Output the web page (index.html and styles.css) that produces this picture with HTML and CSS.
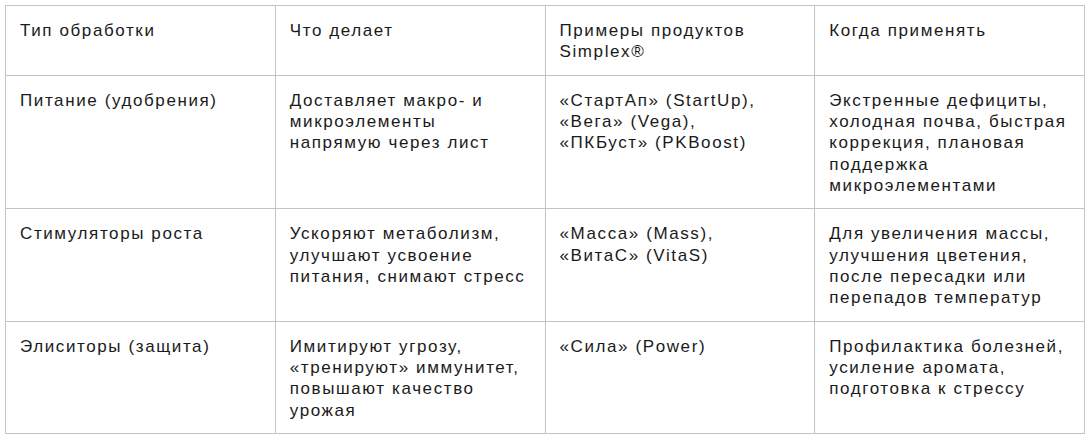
FILE: index.html
```html
<!DOCTYPE html>
<html lang="ru">
<head>
<meta charset="utf-8">
<link rel="stylesheet" href="styles.css">
</head>
<body>
<div class="wrap">
<table class="grid">
  <colgroup><col><col><col><col></colgroup>
  <tr>
    <td>Тип обработки</td>
    <td>Что делает</td>
    <td>Примеры продуктов Simplex®</td>
    <td>Когда применять</td>
  </tr>
  <tr>
    <td>Питание (удобрения)</td>
    <td>Доставляет макро- и микроэлементы напрямую через лист</td>
    <td>«СтартАп» (StartUp), «Вега» (Vega), «ПКБуст»&nbsp;(PKBoost)</td>
    <td>Экстренные дефициты, холодная почва, быстрая коррекция, плановая поддержка микроэлементами</td>
  </tr>
  <tr>
    <td>Стимуляторы роста</td>
    <td>Ускоряют метаболизм, улучшают усвоение питания, снимают стресс</td>
    <td>«Масса» (Mass), «ВитаС»&nbsp;(VitaS)</td>
    <td>Для увеличения массы, улучшения цветения, после пересадки или перепадов температур</td>
  </tr>
  <tr>
    <td>Элиситоры (защита)</td>
    <td>Имитируют угрозу, «тренируют» иммунитет, повышают качество урожая</td>
    <td>«Сила» (Power)</td>
    <td>Профилактика болезней, усиление аромата, подготовка к стрессу</td>
  </tr>
</table>
</div>
</body>
</html>
```
FILE: styles.css
```css
html, body {
  margin: 0;
  padding: 0;
  background: #fff;
}
.wrap {
  padding: 5px;
}
.grid {
  width: 1080px;
  border-collapse: collapse;
  table-layout: fixed;
  font-family: "Liberation Sans", Arial, sans-serif;
  font-size: 17px;
  letter-spacing: 1.6px;
  line-height: 21.33px;
  color: #1a1a1a;
}
.grid td {
  border: 1px solid #c4c4c4;
  padding: 14px 14px 12px 14px;
  vertical-align: top;
  text-align: left;
}
```
